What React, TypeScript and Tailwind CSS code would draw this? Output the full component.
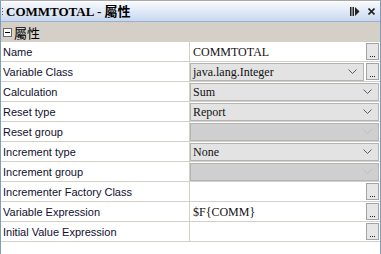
import React from "react";

type Row = {
  label: string;
  kind: "text" | "combo" | "disabled";
  value?: string;
  button?: boolean;
};

const rows: Row[] = [
  { label: "Name", kind: "text", value: "COMMTOTAL", button: true },
  { label: "Variable Class", kind: "combo", value: "java.lang.Integer", button: true },
  { label: "Calculation", kind: "combo", value: "Sum" },
  { label: "Reset type", kind: "combo", value: "Report" },
  { label: "Reset group", kind: "disabled" },
  { label: "Increment type", kind: "combo", value: "None" },
  { label: "Increment group", kind: "disabled" },
  { label: "Incrementer Factory Class", kind: "text", button: true },
  { label: "Variable Expression", kind: "text", value: "$F{COMM}", button: true },
  { label: "Initial Value Expression", kind: "text", button: true },
];

const serif = "font-['Liberation_Serif','Noto_Sans_CJK_TC',serif]";

function Chevron({ dim }: { dim?: boolean }) {
  return (
    <svg width="9" height="6" viewBox="0 0 9 6" className="shrink-0">
      <path
        d="M0.5 0.5 L4.5 4.5 L8.5 0.5"
        fill="none"
        stroke={dim ? "#bdbdbd" : "#5a5a5a"}
        strokeWidth="1"
      />
    </svg>
  );
}

function DotsButton() {
  return (
    <div className="ml-[2px] flex h-[17px] w-[13px] shrink-0 items-end justify-center gap-[1px] border border-[#a4a4a4] bg-[#e6e6e6] pb-[2px]">
      <span className="block h-[1px] w-[1px] bg-[#222]" />
      <span className="block h-[1px] w-[1px] bg-[#222]" />
      <span className="block h-[1px] w-[1px] bg-[#222]" />
    </div>
  );
}

function ValueCell({ row }: { row: Row }) {
  if (row.kind === "text") {
    return (
      <div className="flex h-full items-center pl-[3px] pr-[1px]">
        <span className={`${serif} flex-1 text-[12px] leading-none text-[#111]`}>{row.value}</span>
        {row.button && <DotsButton />}
      </div>
    );
  }
  const disabled = row.kind === "disabled";
  return (
    <div className="flex h-full items-center py-[1px] pr-[1px]">
      <div
        className={`flex h-[18px] flex-1 items-center border border-[#b4b4b4] pl-[2px] pr-[6px] ${
          disabled ? "bg-[#cfcfcf]" : "bg-[#e3e3e3]"
        }`}
      >
        <span className={`${serif} flex-1 text-[12px] leading-none text-[#111]`}>{row.value}</span>
        <Chevron dim={disabled} />
      </div>
      {row.button && <DotsButton />}
    </div>
  );
}

export default function App() {
  return (
    <div className="h-[254px] w-[381px] overflow-hidden bg-white">
      <div className="flex h-[254px] flex-col border-x border-t border-[#7f9db9] border-t-[#a9a9a9] pt-[1px]">
        {/* title bar */}
        <div className="flex h-[20px] items-center border-b border-[#9bb0cf] bg-gradient-to-b from-[#f7f9fd] to-[#c9d8ef] pl-[1px] pr-[5px]">
          <div className="mr-[3px] flex flex-col gap-[2px]">
            <span className="block h-[1px] w-[1px] bg-[#555]" />
            <span className="block h-[1px] w-[1px] bg-[#555]" />
            <span className="block h-[1px] w-[1px] bg-[#555]" />
          </div>
          <span className={`${serif} flex-1 text-[13px] font-bold leading-none text-black`}>
            COMMTOTAL - 屬性
          </span>
          <svg width="10" height="9" viewBox="0 0 10 9" className="mr-[8px]">
            <rect x="0" y="0" width="1.5" height="9" fill="#222" />
            <rect x="2.5" y="0" width="1.5" height="9" fill="#222" />
            <path d="M5 0 L9.5 4.5 L5 9 Z" fill="#222" />
          </svg>
          <svg width="7" height="7" viewBox="0 0 7 7">
            <path d="M0.5 0.5 L6.5 6.5 M6.5 0.5 L0.5 6.5" stroke="#222" strokeWidth="1.6" />
          </svg>
        </div>

        {/* section header */}
        <div className="flex h-[20px] items-center bg-[#d4d0c8] pl-[2px]">
          <div className="mr-[2px] flex h-[9px] w-[9px] items-center justify-center border border-[#6b6b6b] bg-white">
            <span className="block h-[1px] w-[5px] bg-black" />
          </div>
          <span className="font-['Noto_Sans_CJK_TC',sans-serif] text-[13px] leading-none text-black">屬性</span>
        </div>

        {/* property rows */}
        {rows.map((row) => (
          <div key={row.label} className="flex h-[20px] border-b border-[#d4d0c8]">
            <div className="flex w-[189px] shrink-0 items-center border-r border-[#d4d0c8] pl-[2px] pt-[1px]">
              <span className="font-['Liberation_Sans',sans-serif] text-[11px] leading-none text-[#101030]">
                {row.label}
              </span>
            </div>
            <div className="flex-1">
              <ValueCell row={row} />
            </div>
          </div>
        ))}
      </div>
    </div>
  );
}
